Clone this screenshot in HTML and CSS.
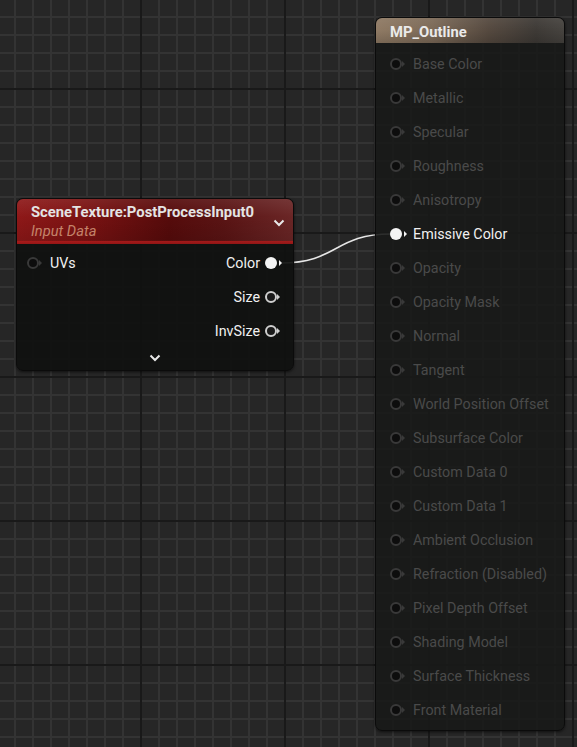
FILE: index.html
```html
<!DOCTYPE html>
<html>
<head>
<meta charset="utf-8">
<link rel="stylesheet" href="styles.css">
</head>
<body>
<div class="canvas">
  <svg class="wire" width="577" height="747" viewBox="0 0 577 747">
    <path d="M281 263 C 338 263, 334 234, 391 234" fill="none" stroke="#e6e6e6" stroke-width="1.6"/>
  </svg>

  <div class="node scene">
    <div class="head red">
      <div class="head-text">
        <div class="title">SceneTexture:PostProcessInput0</div>
        <div class="subtitle">Input Data</div>
      </div>
      <svg class="chev" width="12" height="8" viewBox="0 0 12 8"><path d="M1.5 1.5 L6 6 L10.5 1.5" fill="none" stroke="#e8e8e8" stroke-width="2"/></svg>
    </div>
    <div class="body">
      <div class="row">
        <div class="side left"><span class="pin dim"></span><span class="lbl bright">UVs</span></div>
        <div class="side right"><span class="lbl bright">Color</span><span class="pin filled"></span></div>
      </div>
      <div class="row">
        <div class="side left"></div>
        <div class="side right"><span class="lbl bright">Size</span><span class="pin ring"></span></div>
      </div>
      <div class="row">
        <div class="side left"></div>
        <div class="side right"><span class="lbl bright">InvSize</span><span class="pin ring"></span></div>
      </div>
      <div class="more">
        <svg width="12" height="8" viewBox="0 0 12 8"><path d="M1.5 1.5 L6 6 L10.5 1.5" fill="none" stroke="#e8e8e8" stroke-width="2"/></svg>
      </div>
    </div>
  </div>

  <div class="node material">
    <div class="head tan">
      <div class="title">MP_Outline</div>
    </div>
    <div class="list">
      <div class="item"><span class="pin dim"></span><span class="lbl off">Base Color</span></div>
      <div class="item"><span class="pin dim"></span><span class="lbl off">Metallic</span></div>
      <div class="item"><span class="pin dim"></span><span class="lbl off">Specular</span></div>
      <div class="item"><span class="pin dim"></span><span class="lbl off">Roughness</span></div>
      <div class="item"><span class="pin dim"></span><span class="lbl off">Anisotropy</span></div>
      <div class="item"><span class="pin filled"></span><span class="lbl bright">Emissive Color</span></div>
      <div class="item"><span class="pin dim"></span><span class="lbl off">Opacity</span></div>
      <div class="item"><span class="pin dim"></span><span class="lbl off">Opacity Mask</span></div>
      <div class="item"><span class="pin dim"></span><span class="lbl off">Normal</span></div>
      <div class="item"><span class="pin dim"></span><span class="lbl off">Tangent</span></div>
      <div class="item"><span class="pin dim"></span><span class="lbl off">World Position Offset</span></div>
      <div class="item"><span class="pin dim"></span><span class="lbl off">Subsurface Color</span></div>
      <div class="item"><span class="pin dim"></span><span class="lbl off">Custom Data 0</span></div>
      <div class="item"><span class="pin dim"></span><span class="lbl off">Custom Data 1</span></div>
      <div class="item"><span class="pin dim"></span><span class="lbl off">Ambient Occlusion</span></div>
      <div class="item"><span class="pin dim"></span><span class="lbl off">Refraction (Disabled)</span></div>
      <div class="item"><span class="pin dim"></span><span class="lbl off">Pixel Depth Offset</span></div>
      <div class="item"><span class="pin dim"></span><span class="lbl off">Shading Model</span></div>
      <div class="item"><span class="pin dim"></span><span class="lbl off">Surface Thickness</span></div>
      <div class="item"><span class="pin dim"></span><span class="lbl off">Front Material</span></div>
    </div>
  </div>
</div>
</body>
</html>
```

FILE: styles.css
```css
html, body {
  margin: 0;
  padding: 0;
  background: #262626;
}

.canvas {
  position: relative;
  width: 577px;
  height: 747px;
  overflow: hidden;
  font-family: Roboto, "Liberation Sans", sans-serif;
  background-color: #262626;
  background-image:
    linear-gradient(to right, #191919 2px, transparent 2px),
    linear-gradient(to bottom, #191919 2px, transparent 2px),
    linear-gradient(to right, #333333 2px, transparent 2px),
    linear-gradient(to bottom, #333333 2px, transparent 2px);
  background-size: 144px 144px, 144px 144px, 18px 18px, 18px 18px;
  background-position: 140px 0, 0 88px, 14px 0, 0 16px;
}

.wire {
  position: absolute;
  left: 0;
  top: 0;
  z-index: 1;
}

.node {
  position: absolute;
  box-sizing: border-box;
  border-radius: 7px;
  border: 1px solid #0b0b0b;
  box-shadow: 0 1px 3px rgba(0, 0, 0, 0.6);
  overflow: hidden;
  z-index: 2;
}

.scene {
  left: 16px;
  top: 198px;
  width: 278px;
  height: 173px;
  background: rgba(16, 17, 16, 0.93);
}

.material {
  left: 375px;
  top: 17px;
  width: 190px;
  height: 714px;
  background: rgba(24, 25, 24, 0.9);
}

.head {
  display: flex;
  align-items: center;
  box-sizing: border-box;
}

.red {
  height: 45px;
  padding: 0 8px 0 14px;
  justify-content: space-between;
  background:
    linear-gradient(to bottom, rgba(255, 255, 255, 0.08), rgba(0, 0, 0, 0) 40%, rgba(0, 0, 0, 0.1) 92%, rgba(170, 26, 26, 0.9) 94%, rgba(150, 22, 22, 0.9) 100%),
    linear-gradient(to right, #8e1818 0%, #7a1212 25%, #560b0b 55%, #5a1414 75%, #6a2626 100%);
}

.head-text {
  display: flex;
  flex-direction: column;
  gap: 2px;
}

.title {
  color: #e4e4e4;
  font-weight: bold;
  font-size: 14.8px;
  line-height: 18px;
}

.subtitle {
  color: #c4836a;
  font-style: italic;
  font-size: 14.7px;
  line-height: 17px;
}

.chev {
  margin-top: 2px;
}

.tan {
  height: 25px;
  padding: 3px 14px 0;
  background:
    linear-gradient(to bottom, rgba(255, 255, 255, 0.06), rgba(0, 0, 0, 0) 50%, rgba(0, 0, 0, 0.15) 100%),
    linear-gradient(to right, #8f7a64 0%, #7c6a58 30%, #55493f 60%, #3e3a36 85%, #46433f 100%);
}

.tan .title {
  color: #eaeaea;
}

.body {
  display: flex;
  flex-direction: column;
  padding-top: 2px;
}

.row {
  display: flex;
  justify-content: space-between;
  align-items: center;
  height: 34px;
  padding: 0 16px 0 10px;
}

.side {
  display: flex;
  align-items: center;
}

.side.left {
  gap: 11px;
}

.side.right {
  gap: 5px;
}

.lbl {
  font-size: 14.3px;
  line-height: 16px;
}

.bright {
  color: #f0f0f0;
}

.off {
  color: #4a4a4a;
}

.more {
  display: flex;
  justify-content: center;
  padding-top: 6px;
}

.list {
  display: flex;
  flex-direction: column;
  padding-top: 4px;
}

.item {
  display: flex;
  align-items: center;
  gap: 11px;
  height: 34px;
  padding-left: 14px;
}

.pin {
  position: relative;
  box-sizing: border-box;
  width: 12px;
  height: 12px;
  border-radius: 50%;
  flex: none;
}

.pin::after {
  content: "";
  position: absolute;
  top: 50%;
  right: -5px;
  margin-top: -3px;
  border-top: 3px solid transparent;
  border-bottom: 3px solid transparent;
  border-left: 3px solid currentColor;
}

.pin.dim {
  border: 2px solid #393939;
  background: #0d0d0d;
  color: #393939;
}

.pin.ring {
  border: 2px solid #cfcfcf;
  background: #1a1a1a;
  color: #cfcfcf;
}

.pin.filled {
  background: #f4f4f4;
  color: #f4f4f4;
}
```
